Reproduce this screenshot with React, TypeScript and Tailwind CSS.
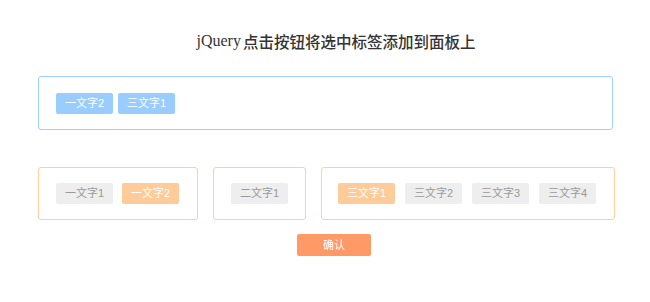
import React from "react";

const font = { fontFamily: '"Liberation Sans", "Noto Sans CJK SC", sans-serif' };

function Tag({ text, kind }: { text: string; kind: "blue" | "grey" | "orange" }) {
  const cls =
    kind === "blue"
      ? "bg-[#99ccff] text-white"
      : kind === "orange"
      ? "bg-[#ffcc99] text-white"
      : "bg-[#eeeeee] text-[#999999]";
  return (
    <span className={`inline-flex h-[21px] w-[57px] items-center justify-center rounded-[2px] text-[11px] ${cls}`}>
      {text}
    </span>
  );
}

export default function App() {
  return (
    <div className="w-[650px] h-[302px] bg-white" style={font}>
      <h1 className="pt-[31px] h-[51px] flex items-end justify-center text-[#333] leading-[20px] pl-[22px] font-medium">
        <span className="text-[16px] pr-[2px]" style={{ fontFamily: '"Liberation Serif", serif' }}>
          jQuery
        </span>
        <span className="text-[15.5px]" style={{ fontFamily: '"Noto Sans CJK SC", sans-serif' }}>
          点击按钮将选中标签添加到面板上
        </span>
      </h1>
      <div className="ml-[38px] w-[575px] mt-[25px] h-[54px] rounded-[3px] border border-[#9fcfff] flex items-center gap-[5px] pl-[17px]">
        <Tag text="一文字2" kind="blue" />
        <Tag text="三文字1" kind="blue" />
      </div>
      <div className="mt-[37px] ml-[38px] flex gap-[15px]">
        <div className="h-[53px] w-[160px] rounded-[3px] border border-[#ffcf9f] flex items-center gap-[9px] pl-[17px]">
          <Tag text="一文字1" kind="grey" />
          <Tag text="一文字2" kind="orange" />
        </div>
        <div className="h-[53px] w-[93px] rounded-[3px] border border-[#ffcf9f] flex items-center pl-[17px]">
          <Tag text="二文字1" kind="grey" />
        </div>
        <div className="h-[53px] w-[294px] rounded-[3px] border border-[#ffcf9f] flex items-center gap-[10px] pl-[16px]">
          <Tag text="三文字1" kind="orange" />
          <Tag text="三文字2" kind="grey" />
          <Tag text="三文字3" kind="grey" />
          <Tag text="三文字4" kind="grey" />
        </div>
      </div>
      <div className="mt-[14px] flex justify-center pl-[18px]">
        <button className="h-[22px] w-[74px] rounded-[2px] bg-[#ff9966] text-white text-[11px]">确认</button>
      </div>
    </div>
  );
}
